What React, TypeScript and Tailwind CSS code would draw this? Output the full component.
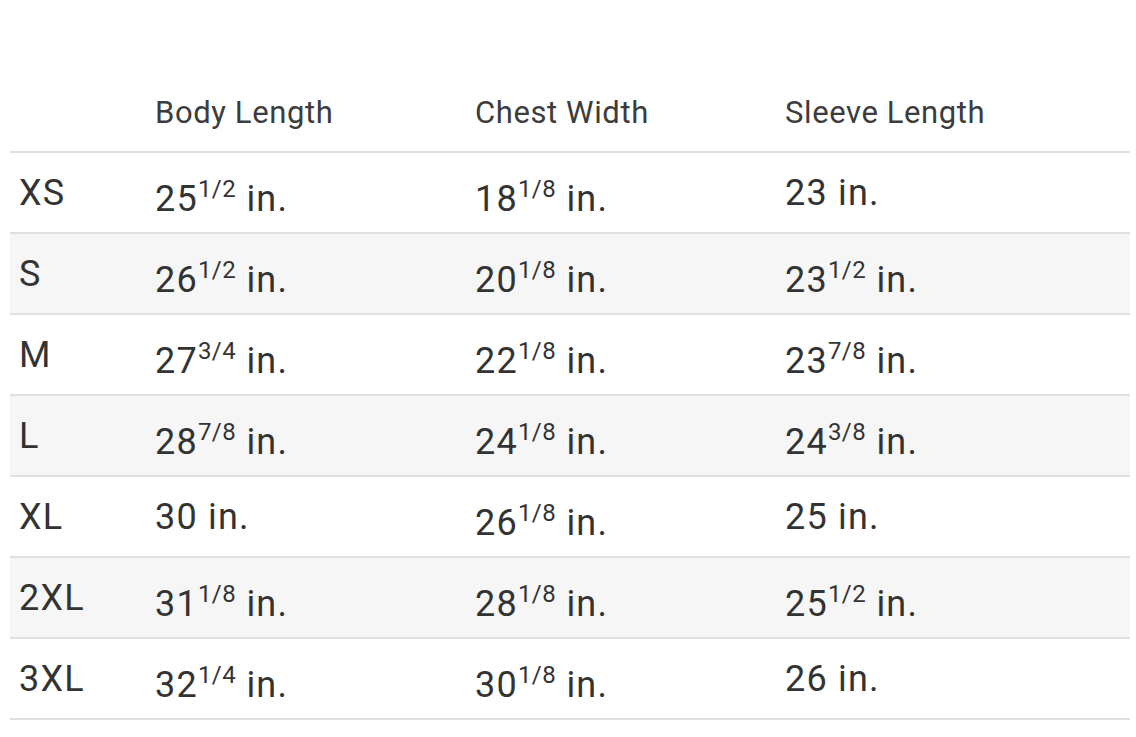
type Cell = { whole: string; frac?: string };

const rows: { size: string; cells: Cell[] }[] = [
  { size: "XS", cells: [{ whole: "25", frac: "1/2" }, { whole: "18", frac: "1/8" }, { whole: "23" }] },
  { size: "S", cells: [{ whole: "26", frac: "1/2" }, { whole: "20", frac: "1/8" }, { whole: "23", frac: "1/2" }] },
  { size: "M", cells: [{ whole: "27", frac: "3/4" }, { whole: "22", frac: "1/8" }, { whole: "23", frac: "7/8" }] },
  { size: "L", cells: [{ whole: "28", frac: "7/8" }, { whole: "24", frac: "1/8" }, { whole: "24", frac: "3/8" }] },
  { size: "XL", cells: [{ whole: "30" }, { whole: "26", frac: "1/8" }, { whole: "25" }] },
  { size: "2XL", cells: [{ whole: "31", frac: "1/8" }, { whole: "28", frac: "1/8" }, { whole: "25", frac: "1/2" }] },
  { size: "3XL", cells: [{ whole: "32", frac: "1/4" }, { whole: "30", frac: "1/8" }, { whole: "26" }] },
];

function Measure({ cell }: { cell: Cell }) {
  return (
    <td className={`px-[9px] align-middle ${cell.frac ? "pt-[12px]" : ""}`}>
      {cell.whole}
      {cell.frac && (
        <sup className="text-[24px] -top-[14px] leading-none tracking-[0.5px]">{cell.frac}</sup>
      )}{" "}
      in.
    </td>
  );
}

export default function App() {
  return (
    <div
      className="w-[1136px] h-[737px] bg-white overflow-hidden pl-[10px]"
      style={{ fontFamily: "Roboto, 'Liberation Sans', sans-serif" }}
    >
      <table className="w-[1120px] border-collapse table-fixed text-[#333333]">
        <colgroup>
          <col className="w-[136px]" />
          <col className="w-[320px]" />
          <col className="w-[310px]" />
          <col className="w-[354px]" />
        </colgroup>
        <thead>
          <tr className="h-[152px] border-b-2 border-[#e0e0e0]">
            <th />
            <th className="px-[9px] pb-[15px] align-bottom text-left font-normal text-[31px] tracking-[0.6px] text-[#3c3c3c]">
              Body Length
            </th>
            <th className="px-[9px] pb-[15px] align-bottom text-left font-normal text-[31px] tracking-[0.6px] text-[#3c3c3c]">
              Chest Width
            </th>
            <th className="px-[9px] pb-[15px] align-bottom text-left font-normal text-[31px] tracking-[0.6px] text-[#3c3c3c]">
              Sleeve Length
            </th>
          </tr>
        </thead>
        <tbody className="text-[36px] tracking-[1.2px]">
          {rows.map((r, i) => (
            <tr
              key={r.size}
              className={`h-[81px] border-b-2 border-[#e0e0e0] ${i % 2 === 1 ? "bg-[#f6f6f6]" : "bg-white"}`}
            >
              <td className="px-[9px] align-middle">{r.size}</td>
              {r.cells.map((c, j) => (
                <Measure key={j} cell={c} />
              ))}
            </tr>
          ))}
        </tbody>
      </table>
    </div>
  );
}
